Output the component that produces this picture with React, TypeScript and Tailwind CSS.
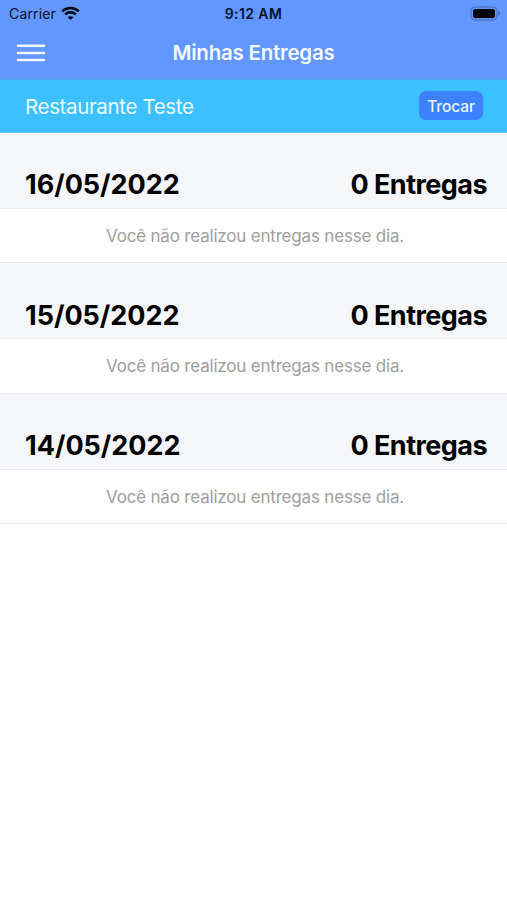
const days = ["16/05/2022", "15/05/2022", "14/05/2022"];

function StatusBar() {
  return (
    <div className="grid h-[27px] grid-cols-3 items-center text-[#06102a]">
      <div className="flex items-center gap-[5px] pl-[9px]">
        <span className="text-[14px] leading-[27px] tracking-[0.15px]">Carrier</span>
        <svg width="19" height="15" viewBox="0 0 19 15" fill="none" stroke="#000" className="-mt-[1px]">
          <path d="M1.2 5.3C5.9 .8 13.1 .8 17.8 5.3" strokeWidth="2.5" />
          <path d="M4.2 8.4C7.2 5.6 11.8 5.6 14.8 8.4" strokeWidth="2.4" />
          <path d="M9.5 14L6.7 11.2C8.3 9.8 10.7 9.8 12.3 11.2Z" fill="#000" stroke="none" />
        </svg>
      </div>
      <span className="text-center text-[14px] font-semibold leading-[27px] tracking-[0.4px]">9:12 AM</span>
      <div className="flex justify-end pr-[6px]">
        <svg width="31" height="15" viewBox="0 0 31 15">
          <rect x="1" y="1" width="26" height="13" rx="3.5" fill="none" stroke="#4669b4" strokeWidth="1" />
          <rect x="3" y="3" width="22" height="9" rx="1.8" fill="#000" />
          <path d="M28.3 5.2C30.6 6 30.6 9 28.3 9.8Z" fill="#4669b4" />
        </svg>
      </div>
    </div>
  );
}

function NavBar() {
  return (
    <div className="grid h-[52px] grid-cols-[1fr_auto_1fr] items-center">
      <button aria-label="Menu" className="ml-[16px] w-[30px]">
        <svg width="30" height="20" viewBox="0 0 30 20" stroke="#f3f8ff" strokeWidth="2.5" strokeLinecap="round" className="block">
          <path d="M2 2.8H28M2 9.9H28M2 17.1H28" />
        </svg>
      </button>
      <h1 className="text-[20.5px] font-semibold leading-[52px] tracking-[-0.23px] text-[#f5f8ff]">Minhas Entregas</h1>
    </div>
  );
}

function Day({ date }: { date: string }) {
  return (
    <section className="h-[130.25px]">
      <div className="flex h-[76px] items-end justify-between border-b border-[#e8eaec] bg-[#f4f6fa] pb-[5.6px] pl-[25px] pr-[20px] text-[27px] font-bold leading-[34px] text-black">
        <span>{date}</span>
        <span className="tracking-[-0.55px]">0 Entregas</span>
      </div>
      <p className="h-[54.25px] border-b border-[#e8eaec] pl-[3px] text-center text-[17px] leading-[55px] tracking-[-0.19px] text-[#9e9e9e]">
        Você não realizou entregas nesse dia.
      </p>
    </section>
  );
}

export default function App() {
  return (
    <main className="min-h-screen bg-white font-['Inter',sans-serif]">
      <header className="bg-[#6297ff]">
        <StatusBar />
        <NavBar />
      </header>
      <div className="flex h-[54px] items-center justify-between border-b border-t border-b-[#60c8fa] border-t-[#4da8f2] bg-[#3dc0ff] pl-[25px] pr-[24px]">
        <span className="pt-[2px] text-[20.5px] tracking-[-0.35px] text-[#e9faff]">Restaurante Teste</span>
        <button className="-mt-[1px] h-[29px] w-[64px] rounded-[7px] bg-[#3c82ff] pt-[2px] text-[15.5px] font-medium tracking-[-0.1px] text-[#e9f4ff]">Trocar</button>
      </div>
      {days.map((date) => (
        <Day key={date} date={date} />
      ))}
    </main>
  );
}
